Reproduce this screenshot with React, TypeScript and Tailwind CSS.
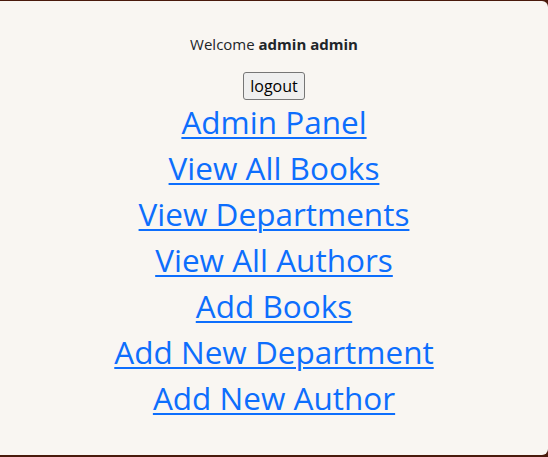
const links = [
  "Admin Panel",
  "View All Books",
  "View Departments",
  "View All Authors",
  "Add Books",
  "Add New Department",
  "Add New Author",
];

function App() {
  return (
    <div className="h-[457px] w-[548px] bg-[#4a1a0c] pt-px pb-[2px]">
      <div
        className="h-full rounded-r-md bg-[#f9f6f2] text-center text-[#212529]"
        style={{ fontFamily: '"Open Sans", "Noto Sans", sans-serif' }}
      >
        <p className="pt-[33px] text-[15px] leading-[20px]">
          Welcome <b>admin admin</b>
        </p>
        <button className="mt-[18px] rounded-[3px] border border-[#767676] bg-[#efefef] px-[6px] py-[3px] text-[16px] leading-[20px] text-black">
          logout
        </button>
        <div className="mt-[3px] flex flex-col items-center">
          {links.map((l) => (
            <a
              key={l}
              href="#"
              className="mb-2 text-[31.5px] leading-[38px] text-[#0d6efd] underline decoration-2 underline-offset-[3px]"
            >
              {l}
            </a>
          ))}
        </div>
      </div>
    </div>
  );
}

export default App;
